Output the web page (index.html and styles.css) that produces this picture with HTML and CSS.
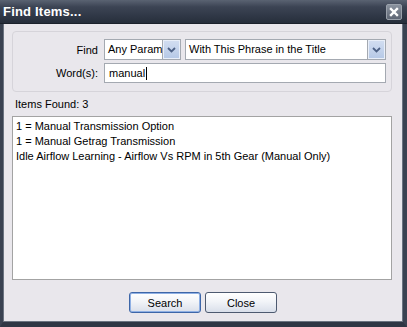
FILE: index.html
```html
<!DOCTYPE html>
<html lang="en">
  <head>
    <meta charset="UTF-8" />
    <title>Find Items...</title>
    <link rel="stylesheet" href="styles.css">
  </head>
  <body>
    <div class="window">
      <div class="titlebar">
        <span class="title">Find Items...</span>
        <div class="close-btn">
          <svg width="10" height="10" viewBox="0 0 10 10"><path d="M2 2 L8 8 M8 2 L2 8" stroke="#fff" stroke-width="2.4" stroke-linecap="square"/></svg>
        </div>
      </div>

      <div class="content">
        <div class="group">
          <div class="form-row">
            <label class="form-label">Find</label>
            <div class="combo combo-small">
              <span class="combo-text">Any Param</span>
              <span class="combo-btn"><svg width="9" height="6" viewBox="0 0 9 6"><path d="M1 1 L4.5 4.5 L8 1" fill="none" stroke="#4d6185" stroke-width="1.8"/></svg></span>
            </div>
            <div class="combo combo-wide">
              <span class="combo-text">With This Phrase in the Title</span>
              <span class="combo-btn"><svg width="9" height="6" viewBox="0 0 9 6"><path d="M1 1 L4.5 4.5 L8 1" fill="none" stroke="#4d6185" stroke-width="1.8"/></svg></span>
            </div>
          </div>
          <div class="form-row">
            <label class="form-label">Word(s):</label>
            <div class="textbox">manual<span class="caret"></span></div>
          </div>
        </div>

        <p class="found">Items Found: 3</p>

        <ul class="results">
          <li>1 = Manual Transmission Option</li>
          <li>1 = Manual Getrag Transmission</li>
          <li>Idle Airflow Learning - Airflow Vs RPM in 5th Gear (Manual Only)</li>
        </ul>

        <div class="buttons">
          <button class="btn btn-default">Search</button>
          <button class="btn">Close</button>
        </div>
      </div>
    </div>
  </body>
</html>
```

FILE: styles.css
```css
* {
  box-sizing: border-box;
  margin: 0;
  padding: 0;
}

body {
  font-family: 'Liberation Sans', Arial, sans-serif;
  font-size: 11px;
  color: #000;
  background: #2b3240;
}

.window {
  width: 407px;
  height: 327px;
  display: flex;
  flex-direction: column;
  border-left: 3px solid #3a4251;
  border-right: 4px solid #3a4251;
  border-bottom: 5px solid #2f3644;
  background: #e9e7ec;
  box-shadow: inset 1px 0 0 #6b7380, inset -1px 0 0 #6b7380, inset 0 -1px 0 #6b7380;
}

.titlebar {
  height: 24px;
  margin: 0 -4px 0 -3px;
  display: flex;
  align-items: center;
  justify-content: space-between;
  padding: 0 5px 0 3px;
  background: linear-gradient(to bottom, #5a6372 0%, #3c4454 30%, #262e3b 100%);
  border-bottom: 1px solid #1b212b;
}

.title {
  color: #fff;
  font-size: 13px;
  font-weight: bold;
  letter-spacing: 0.2px;
}

.close-btn {
  width: 16px;
  height: 16px;
  display: flex;
  align-items: center;
  justify-content: center;
  background: linear-gradient(to bottom, #8a929e, #5f6775);
  border: 1px solid #9aa1ab;
  border-radius: 2px;
}

.content {
  flex: 1;
  display: flex;
  flex-direction: column;
  padding: 7px 11px 0 9px;
}

.group {
  height: 61px;
  border: 1px solid #d6d4da;
  border-radius: 4px;
  padding: 7px 5px 0 0;
  display: flex;
  flex-direction: column;
  gap: 3px;
}

.form-row {
  display: flex;
  align-items: center;
  gap: 4px;
}

.form-label {
  width: 87px;
  text-align: right;
  padding-right: 2px;
}

.combo {
  height: 21px;
  display: flex;
  background: #fff;
  border: 1px solid #a4a9b1;
  overflow: hidden;
}

.combo-small {
  width: 77px;
}

.combo-wide {
  flex: 1;
}

.combo-text {
  flex: 1;
  padding: 3px 0 0 3px;
  white-space: nowrap;
  overflow: hidden;
}

.combo-btn {
  width: 18px;
  display: flex;
  align-items: center;
  justify-content: center;
  background: linear-gradient(to bottom, #d3def1, #b5c8e6);
  border-left: 1px solid #a4a9b1;
  box-shadow: inset 0 0 0 1px #e9eff9;
}

.textbox {
  flex: 1;
  height: 20px;
  background: #fff;
  border: 1px solid #a4a9b1;
  padding: 3px 0 0 4px;
  display: flex;
  align-items: flex-start;
}

.caret {
  width: 1px;
  height: 13px;
  background: #000;
  margin-left: 1px;
}

.found {
  margin-top: 6px;
  padding-left: 3px;
  height: 18px;
}

.results {
  list-style: none;
  height: 164px;
  background: #fff;
  border: 1px solid #a3a3a3;
  padding: 2px 0 0 3px;
  line-height: 15px;
}

.buttons {
  display: flex;
  justify-content: center;
  gap: 4px;
  margin-top: 12px;
  padding-left: 2px;
}

.btn {
  width: 72px;
  height: 21px;
  font-family: 'Liberation Sans', Arial, sans-serif;
  font-size: 11px;
  color: #000;
  background: linear-gradient(to bottom, #ffffff 0%, #f2f4f8 45%, #d9dfea 100%);
  border: 1px solid #4d5a70;
  border-radius: 3px;
}

.btn-default {
  border-color: #3d66a8;
  box-shadow: inset 0 0 0 1px #8fb0e4;
}
```
